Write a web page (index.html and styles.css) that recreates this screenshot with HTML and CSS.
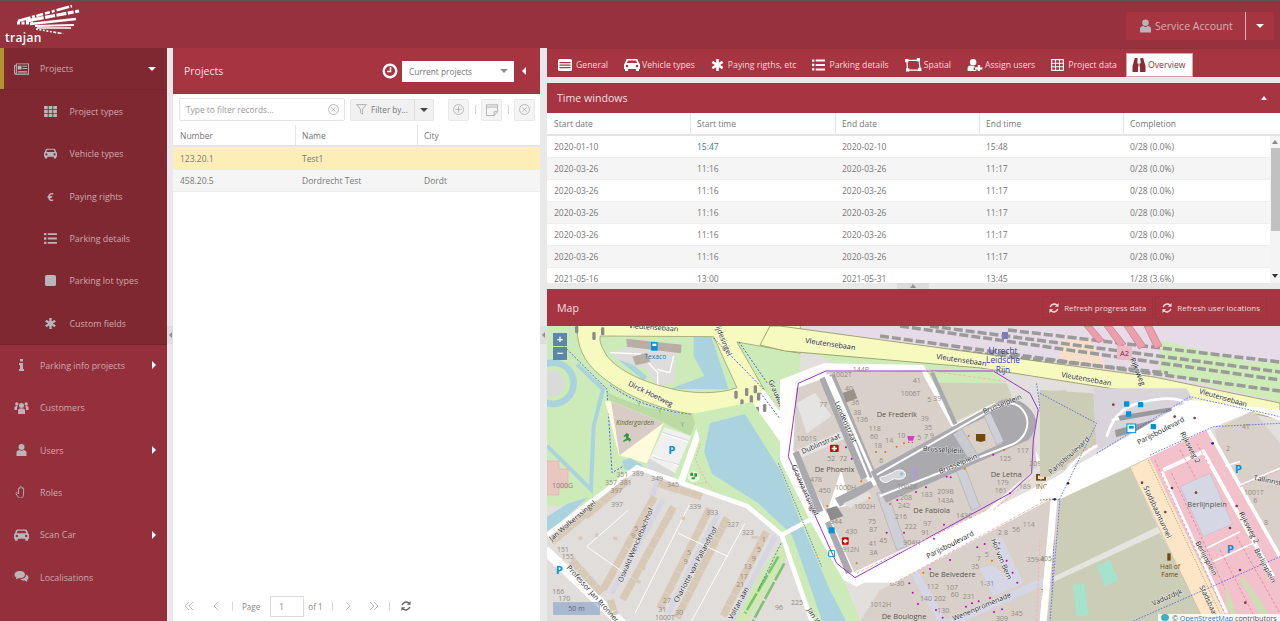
FILE: index.html
```html
<!DOCTYPE html>
<html lang="en">
<head>
<meta charset="utf-8">
<title>Trajan</title>
<link rel="stylesheet" href="styles.css">
</head>
<body>
<svg class="sprite" width="0" height="0">
  <defs>
    <symbol id="i-news" viewBox="0 0 16 12"><path fill="currentColor" fill-rule="evenodd" d="M0 2h2V0h14v12H1.500A1.500 1.500 0 0 1 0 10.500zM3 1v10h12V1zM1 3v7.500h1V3zM4 2.500h4v4H4zM9 2.500h5v1H9zM9 5h5v1H9zM4 8h10v1H4zM4 9.700h10v.8H4z"/></symbol>
    <symbol id="i-grid" viewBox="0 0 14 12"><path fill="currentColor" d="M0 0h4v3.500H0zM5 0h4v3.500H5zM10 0h4v3.500h-4zM0 4.250h4v3.500H0zM5 4.250h4v3.500H5zM10 4.250h4v3.500h-4zM0 8.500h4V12H0zM5 8.500h4V12H5zM10 8.500h4V12h-4z"/></symbol>
    <symbol id="i-car" viewBox="0 0 16 12"><path fill="currentColor" fill-rule="evenodd" d="M3.500 0h9c.7 0 1.200.4 1.400 1l1 3c.7.4 1.100 1 1.100 1.800V10h-1v1.500a.5.500 0 0 1-.5.500h-2a.5.500 0 0 1-.5-.5V10H4v1.500a.5.500 0 0 1-.5.500h-2a.5.500 0 0 1-.5-.5V10H0V5.800C0 5 .4 4.400 1.100 4l1-3c.2-.6.700-1 1.400-1zM3.800 1.500 3 4h10l-.8-2.500zM3 5.800a1.300 1.300 0 1 0 0 2.600 1.300 1.300 0 0 0 0-2.600zm10 0a1.300 1.300 0 1 0 0 2.600 1.300 1.300 0 0 0 0-2.600z"/></symbol>
    <symbol id="i-list" viewBox="0 0 14 12"><path fill="currentColor" d="M0 0h2.500v2.500H0zM4 .2h10v2.100H4zM0 4.750h2.500v2.500H0zM4 4.950h10v2.100H4zM0 9.500h2.500V12H0zM4 9.700h10v2.100H4z"/></symbol>
    <symbol id="i-square" viewBox="0 0 12 12"><rect width="12" height="12" rx="2" fill="currentColor"/></symbol>
    <symbol id="i-star" viewBox="0 0 12 12"><path fill="currentColor" d="M4.700 0h2.600v3.700l3.200-1.850 1.300 2.250L8.600 6l3.200 1.900-1.300 2.250L7.300 8.300V12H4.700V8.300l-3.200 1.850L.2 7.900 3.400 6 .2 4.100l1.300-2.250L4.700 3.700z"/></symbol>
    <symbol id="i-info" viewBox="0 0 6 12"><path fill="currentColor" d="M1.500 0h3v2.500h-3zM.5 4h4v6h1v2H.5v-2h1V6h-1z"/></symbol>
    <symbol id="i-users" viewBox="0 0 14 12"><g fill="currentColor"><circle cx="7" cy="3.500" r="2.500"/><circle cx="2.300" cy="2" r="1.700"/><circle cx="11.700" cy="2" r="1.700"/><path d="M3.500 12V8.500C3.500 7 5 6.200 7 6.200s3.500.8 3.500 2.300V12zM0 8V5.500C0 4.600 1 4 2.300 4c.5 0 .8.300 1 .8C2.500 5.500 2.400 7 2.500 8zM14 8V5.500C14 4.600 13 4 11.700 4c-.5 0-.8.300-1 .8.800.7.900 2.200.8 3.200z"/></g></symbol>
    <symbol id="i-user" viewBox="0 0 10 12"><g fill="currentColor"><circle cx="5" cy="3" r="3"/><path d="M0 12V8.500C0 7 1.500 6 3 6c.6.500 1.200.8 2 .8S6.400 6.500 7 6c1.500 0 3 1 3 2.500V12z"/></g></symbol>
    <symbol id="i-hand" viewBox="0 0 12 12"><path fill="none" stroke="currentColor" stroke-width=".9" d="M4 12c-1 0-1.500-1-2-2L.5 7.500c-.4-.8.600-1.500 1.200-.8L3 8V2.500c0-.8 1.200-.8 1.200 0V1.200c0-.8 1.300-.8 1.300 0v.3c0-.8 1.300-.8 1.300 0v1c0-.8 1.300-.8 1.300 0V8c0 2-.8 4-2.500 4z"/></symbol>
    <symbol id="i-chat" viewBox="0 0 14 12"><g fill="currentColor"><path d="M5.500 0C2.500 0 0 1.500 0 3.700c0 1.200.8 2.200 2 2.900L1.300 8.500 4 7.200c2.800.3 6.500-.8 6.500-3.500C10.500 1.500 8.500 0 5.500 0z"/><path d="M11.500 3.500c.3 3-2.500 4.500-5.500 4.700.8 1 2.500 1.500 4.200 1.300L13 11l-.6-2C13.500 8.400 14 7.500 14 6.500c0-1.200-1-2.400-2.500-3z"/></g></symbol>
    <symbol id="i-form" viewBox="0 0 14 12"><path fill="currentColor" fill-rule="evenodd" d="M1.500 0h11A1.500 1.500 0 0 1 14 1.500v9a1.500 1.500 0 0 1-1.500 1.500h-11A1.500 1.500 0 0 1 0 10.500v-9A1.500 1.500 0 0 1 1.500 0zM1.500 3v1.300h11V3zm0 2.500v1.300h11V5.500zm0 2.500v1.300h11V8z"/></symbol>
    <symbol id="i-spatial" viewBox="0 0 18 15"><g fill="none" stroke="currentColor" stroke-width="1.300"><path d="M3 2.500h11M2 3l.5 10M15 3l1 9M3 13h12"/></g><g fill="currentColor"><rect x="0" y="1" width="3.500" height="3.500"/><rect x="12.500" y="0" width="3.500" height="3.500"/><rect x="1" y="11" width="3.500" height="3.500"/><rect x="14" y="10.500" width="3.500" height="3.500"/></g></symbol>
    <symbol id="i-assign" viewBox="0 0 16 13"><g fill="currentColor"><circle cx="6" cy="3.500" r="3.500"/><path d="M0 13V9.800C0 8.200 1.500 7 3.500 7c.7.500 1.600.8 2.500.8.500 0 1-.1 1.500-.3v2H6.500V12h3v1z"/><path d="M11 6.500h2.500V9H16v2.300h-2.500V13H11v-1.700H8V9h3z"/></g></symbol>
    <symbol id="i-table" viewBox="0 0 13 12"><path fill="currentColor" fill-rule="evenodd" d="M1 0h11a1 1 0 0 1 1 1v10a1 1 0 0 1-1 1H1a1 1 0 0 1-1-1V1a1 1 0 0 1 1-1zm.2 1.300v2.500H4V1.300zm3.800 0v2.500h3V1.300zm4 0v2.500h2.800V1.300zM1.200 4.800v2.500H4V4.800zm3.800 0v2.500h3V4.800zm4 0v2.500h2.800V4.800zM1.200 8.300v2.500H4V8.300zm3.800 0v2.500h3V8.300zm4 0v2.500h2.800V8.300z"/></symbol>
    <symbol id="i-binoc" viewBox="0 0 14 15"><path fill="currentColor" d="M2.500 0h3v3h-.2v3H6v8.500a.5.500 0 0 1-.5.500H.5a.5.500 0 0 1-.5-.5V9zM8.500 0h3v0L14 9v5.500a.5.500 0 0 1-.5.500h-5a.5.500 0 0 1-.5-.5V6h.7V3h-.2zM6.500 6h1v3h-1z"/></symbol>
    <symbol id="i-refresh" viewBox="0 0 12 12"><g fill="none" stroke="currentColor" stroke-width="1.800"><path d="M1.500 5A4.700 4.700 0 0 1 9.500 2.800"/><path d="M10.500 7A4.700 4.700 0 0 1 2.500 9.200"/></g><path fill="currentColor" d="M11.500 0v4.500H7zM.5 12V7.500H5z"/></symbol>
    <symbol id="i-circle-plus" viewBox="0 0 14 14"><circle cx="7" cy="7" r="6.300" fill="none" stroke="currentColor"/><path stroke="currentColor" d="M7 3v8M3 7h8"/></symbol>
    <symbol id="i-circle-x" viewBox="0 0 14 14"><circle cx="7" cy="7" r="6.300" fill="none" stroke="currentColor"/><path stroke="currentColor" d="M4.300 4.300l5.400 5.400M9.700 4.300l-5.400 5.400"/></symbol>
    <symbol id="i-note" viewBox="0 0 14 14"><path fill="none" stroke="currentColor" d="M.5 1h13v8l-4 4.500H.5zM.5 3.500h13M9.500 13.500V9h4"/></symbol>
    <symbol id="i-funnel" viewBox="0 0 12 12"><path fill="none" stroke="currentColor" d="M.7.700h10.600L7.200 5.500V11L4.800 9.500v-4z"/></symbol>
    <symbol id="i-clock" viewBox="0 0 16 16"><circle cx="8" cy="8" r="6.300" fill="none" stroke="currentColor" stroke-width="2.400"/><path fill="none" stroke="currentColor" stroke-width="1.500" d="M8.500 4v4.500H5"/></symbol>
    <symbol id="i-dbl-l" viewBox="0 0 10 10"><path fill="none" stroke="currentColor" d="M5 1 1 5l4 4M9 1 5 5l4 4"/></symbol>
    <symbol id="i-sgl-l" viewBox="0 0 10 10"><path fill="none" stroke="currentColor" d="M7 1 3 5l4 4"/></symbol>
    <symbol id="i-sgl-r" viewBox="0 0 10 10"><path fill="none" stroke="currentColor" d="M3 1l4 4-4 4"/></symbol>
    <symbol id="i-dbl-r" viewBox="0 0 10 10"><path fill="none" stroke="currentColor" d="M1 1l4 4-4 4M5 1l4 4-4 4"/></symbol>
  </defs>
</svg>

<header class="topbar">
  <div class="logo">
    <svg class="logo-rays" viewBox="0 0 80 30">
      <g fill="none" stroke="#fff">
        <path stroke-width="2.600" stroke-dasharray="13 1.500 3 1.500 7 2 5 2 3 2" d="M18 17 72 2"/>
        <path stroke-width="3.200" stroke-dasharray="18 1.500 10 1.500 10 1.500 6 1.500" d="M26 17 79 7"/>
        <path stroke-width="2.600" d="M30 20 76 15"/>
        <path stroke-width="2" d="M35 22 74 21"/>
        <path stroke-width="1.500" d="M37 24 71 24"/>
        <path stroke-width="1.600" stroke-dasharray="2 1.500 2 1.500 2 1.500 2 1.500 2 1.500 3 1.500 4" d="M36 25 64 30"/>
        <path stroke-width="3" stroke-dasharray="3 1.500" d="M17 19 33 19"/>
      </g>
    </svg>
    <span class="logo-name">trajan</span>
  </div>
  <div class="account">
    <svg class="account-icon"><use href="#i-user"/></svg>
    <span class="account-name">Service Account</span>
    <span class="account-caret"><i class="tri-down tri-white"></i></span>
  </div>
</header>

<div class="layout">
  <nav class="sidebar">
    <div class="group-open">
      <a class="nav-item nav-current"><svg class="nav-icon"><use href="#i-news"/></svg><span>Projects</span><i class="tri-down tri-white nav-arrow"></i></a>
      <a class="nav-sub"><svg class="nav-icon"><use href="#i-grid"/></svg><span>Project types</span></a>
      <a class="nav-sub"><svg class="nav-icon"><use href="#i-car"/></svg><span>Vehicle types</span></a>
      <a class="nav-sub"><b class="nav-euro">€</b><span>Paying rights</span></a>
      <a class="nav-sub"><svg class="nav-icon"><use href="#i-list"/></svg><span>Parking details</span></a>
      <a class="nav-sub"><svg class="nav-icon"><use href="#i-square"/></svg><span>Parking lot types</span></a>
      <a class="nav-sub"><svg class="nav-icon"><use href="#i-star"/></svg><span>Custom fields</span></a>
    </div>
    <a class="nav-item"><svg class="nav-icon"><use href="#i-info"/></svg><span>Parking info projects</span><i class="tri-right nav-arrow"></i></a>
    <a class="nav-item"><svg class="nav-icon"><use href="#i-users"/></svg><span>Customers</span></a>
    <a class="nav-item"><svg class="nav-icon"><use href="#i-user"/></svg><span>Users</span><i class="tri-right nav-arrow"></i></a>
    <a class="nav-item"><svg class="nav-icon"><use href="#i-hand"/></svg><span>Roles</span></a>
    <a class="nav-item"><svg class="nav-icon"><use href="#i-car"/></svg><span>Scan Car</span><i class="tri-right nav-arrow"></i></a>
    <a class="nav-item"><svg class="nav-icon"><use href="#i-chat"/></svg><span>Localisations</span></a>
  </nav>

  <div class="split"><i class="split-tab"><i class="tri-left tri-grey"></i></i></div>

  <section class="projects">
    <div class="projects-head">
      <h2 class="projects-title">Projects</h2>
      <svg class="clock"><use href="#i-clock"/></svg>
      <div class="select"><span>Current projects</span><i class="tri-down tri-grey"></i></div>
      <i class="tri-left tri-white collapse"></i>
    </div>
    <div class="toolbar">
      <div class="filter-box"><span>Type to filter records...</span><svg class="ico-11"><use href="#i-circle-x"/></svg></div>
      <div class="filter-by">
        <span class="filter-main"><svg class="ico-11"><use href="#i-funnel"/></svg><span>Filter by...</span></span>
        <span class="filter-caret"><i class="tri-down tri-dark"></i></span>
      </div>
      <span class="tool-btn tool-first"><svg class="ico-11"><use href="#i-circle-plus"/></svg></span>
      <i class="tool-sep"></i>
      <span class="tool-btn"><svg class="ico-12"><use href="#i-note"/></svg></span>
      <i class="tool-sep"></i>
      <span class="tool-btn"><svg class="ico-11"><use href="#i-circle-x"/></svg></span>
    </div>
    <div class="grid-head list-cols">
      <span>Number</span><span>Name</span><span>City</span>
    </div>
    <div class="list-row list-cols row-selected"><span>123.20.1</span><span>Test1</span><span></span></div>
    <div class="list-row list-cols row-alt"><span>458.20.5</span><span>Dordrecht Test</span><span>Dordt</span></div>
    <div class="pager">
      <svg class="pg-ico pg-a"><use href="#i-dbl-l"/></svg>
      <svg class="pg-ico pg-b"><use href="#i-sgl-l"/></svg>
      <i class="pg-sep"></i>
      <span class="pg-text pg-page">Page</span>
      <span class="pg-input">1</span>
      <span class="pg-text pg-of">of 1</span>
      <i class="pg-sep pg-sep2"></i>
      <svg class="pg-ico pg-c"><use href="#i-sgl-r"/></svg>
      <svg class="pg-ico pg-d"><use href="#i-dbl-r"/></svg>
      <i class="pg-sep pg-sep3"></i>
      <svg class="pg-refresh"><use href="#i-refresh"/></svg>
    </div>
  </section>

  <div class="split split-right"><i class="split-tab"><i class="tri-left tri-grey"></i></i></div>

  <section class="detail">
    <div class="tabs">
      <a class="tab"><svg class="tab-ico w14"><use href="#i-form"/></svg><span>General</span></a>
      <a class="tab"><svg class="tab-ico w16"><use href="#i-car"/></svg><span class="tight">Vehicle types</span></a>
      <a class="tab"><svg class="tab-ico w13"><use href="#i-star"/></svg><span>Paying rigths, etc</span></a>
      <a class="tab"><svg class="tab-ico w13"><use href="#i-list"/></svg><span>Parking details</span></a>
      <a class="tab"><svg class="tab-ico w17"><use href="#i-spatial"/></svg><span class="tight">Spatial</span></a>
      <a class="tab"><svg class="tab-ico w16"><use href="#i-assign"/></svg><span class="tight">Assign users</span></a>
      <a class="tab"><svg class="tab-ico w13"><use href="#i-table"/></svg><span>Project data</span></a>
      <a class="tab tab-active"><svg class="tab-ico w14"><use href="#i-binoc"/></svg><span class="tight">Overview</span></a>
    </div>

    <div class="panel-head tw-head"><h3>Time windows</h3><i class="tri-up tri-white"></i></div>
    <div class="tw">
      <div class="grid-head tw-head-row tw-cols"><span>Start date</span><span>Start time</span><span>End date</span><span>End time</span><span>Completion</span></div>
      <div class="tw-body">
        <div class="tw-rows">
          <div class="tw-row tw-cols"><span>2020-01-10</span><span class="time-blue">15:47</span><span>2020-02-10</span><span>15:48</span><span>0/28 (0.0%)</span></div>
          <div class="tw-row tw-cols row-alt"><span>2020-03-26</span><span>11:16</span><span>2020-03-26</span><span>11:17</span><span>0/28 (0.0%)</span></div>
          <div class="tw-row tw-cols"><span>2020-03-26</span><span>11:16</span><span>2020-03-26</span><span>11:17</span><span>0/28 (0.0%)</span></div>
          <div class="tw-row tw-cols row-alt"><span>2020-03-26</span><span>11:16</span><span>2020-03-26</span><span>11:17</span><span>0/28 (0.0%)</span></div>
          <div class="tw-row tw-cols"><span>2020-03-26</span><span>11:16</span><span>2020-03-26</span><span>11:17</span><span>0/28 (0.0%)</span></div>
          <div class="tw-row tw-cols row-alt"><span>2020-03-26</span><span>11:16</span><span>2020-03-26</span><span>11:17</span><span>0/28 (0.0%)</span></div>
          <div class="tw-row tw-cols"><span>2021-05-16</span><span>13:00</span><span>2021-05-31</span><span>13:45</span><span>1/28 (3.6%)</span></div>
        </div>
        <div class="scrollbar"><i class="sb-up"></i><i class="sb-thumb"></i><i class="sb-down"></i></div>
      </div>
    </div>
    <div class="hsplit"><i class="hsplit-tab"><i class="tri-up tri-grey"></i></i></div>

    <div class="panel-head map-head">
      <h3>Map</h3>
      <a class="map-btn"><svg class="ico-10"><use href="#i-refresh"/></svg><span>Refresh progress data</span></a>
      <a class="map-btn"><svg class="ico-10"><use href="#i-refresh"/></svg><span>Refresh user locations</span></a>
    </div>

    <div class="map">
      <svg class="map-svg" viewBox="547 326 733 295" preserveAspectRatio="none">
        <rect x="547" y="326" width="733" height="295" fill="#e2dfdc"/>

        <!-- railway land -->
        <path fill="#e8dbe8" d="M770 326H1280V404L1154 376 1014 357 770 326z"/>
        <path fill="#cfecb8" d="M1160 340l90 22 30 0v40l-120-28z"/>
        <path fill="#cfecb8" d="M787 340 960 350 1010 390 870 380z"/>
        <path fill="#f5dfc9" d="M1060 340l30 0 20 30-50-8z"/>
        <g fill="none" stroke="#9a9a9a" stroke-width="3.500" stroke-dasharray="9 3">
          <path d="M900 326 1280 380"/><path d="M930 326 1280 372"/><path d="M1008 330 1280 362"/><path d="M830 338 1168 373"/><path d="M880 336 1280 391"/>
        </g>
        <path fill="#eb9eac" stroke="#c86070" stroke-width=".5" d="M1084 326h8l12 14-6 3zM1104 326h8l14 18-7 3zM1124 326h8l14 20-7 3zM1144 326h8l10 20-7 3z"/>
        <rect x="1117" y="346" width="15" height="14" rx="2" fill="#ecbac4"/>
        <text class="t-shield" x="1124.500" y="356">A2</text>
        <rect x="1002" y="332" width="6" height="7" fill="#7c7cb8"/>

        <!-- north-west quarter, drawn in zoomed coordinates -->
        <g transform="translate(547 326) scale(.3333)">
          <rect x="0" y="0" width="760" height="540" fill="#cdebb8"/>
          <circle cx="18" cy="172" r="72" fill="#aad3df"/>
          <circle cx="18" cy="172" r="52" fill="#cdebb8"/>
          <circle cx="12" cy="172" r="40" fill="#dadada"/>
          <path fill="none" stroke="#aad3df" stroke-width="12" d="M90 115 168 190 140 300 132 490 0 360"/>
          <path fill="none" stroke="#3344ee" stroke-width="2.500" stroke-dasharray="6 5" d="M20 30 180 190 195 440 230 420"/>
          <!-- ring of the yellow road -->
          <path fill="#aad3df" d="M440 28H492L545 190 370 188 472 150 440 90z"/>
          <path fill="#aad3df" d="M210 98 232 96 300 150 292 164z"/>
          <path fill="#dedddb" d="M190 80 255 60 390 76 380 170 332 182 300 130 210 100z"/>
          <path fill="none" stroke="#fff" stroke-width="4" d="M190 80 280 84 332 140 332 182M380 90 368 140 330 130"/>
          <path fill="#b9aea6" d="M238 38 404 56 402 82 240 62z"/>
          <path fill="#b9aea6" d="M256 92 300 80 310 108 266 118z"/>
          <path fill="#0092da" d="M312 48h20v26h-20z"/><path fill="#fff" d="M316 53h12v7h-12z"/>
          <text class="t-texaco3" x="325" y="98">Texaco</text>
          <path fill="#f7fabf" stroke="#8f9160" stroke-width="2" fill-rule="evenodd" d="M90 -10H760V82L570 48 652 192 640 240 600 252C540 268 460 272 400 258 300 238 200 190 140 130 100 90 88 40 90 -10zM160 30 500 32 570 185C520 205 430 205 360 185 280 165 210 130 180 90 165 65 155 45 160 30z"/>
          <path fill="none" stroke="#3344ee" stroke-width="2.500" stroke-dasharray="6 5" d="M500 36 650 190M190 178C260 230 360 262 460 268 530 270 590 260 620 246M576 48 660 170"/>
          <!-- kindergarten -->
          <path fill="#bcdba4" d="M178 198C260 240 360 262 454 268L430 330 350 290 190 226z"/>
          <path fill="#fdfbdc" d="M174 226 192 226 350 290 300 412 216 388z"/>
          <path fill="#d7cdc6" d="M192 226 350 290 218 388z"/>
          <path fill="#f0f0f0" d="M352 304 432 330 384 442 308 398z"/>
          <path fill="#d9d9d9" d="M308 398 384 442 372 470 296 430z"/>
          <path fill="none" stroke="#fff" stroke-width="3" d="M344 322 424 348M318 388 396 420"/>
          <path fill="none" stroke="#a0a0a0" stroke-width="1" d="M344 318 424 344M318 394 396 416"/>
          <path fill="#aad3df" d="M226 404 250 396 296 424 270 436 232 430z"/>
          <path fill="#2a9a3a" d="M238 322l8 2-2 10 8 6-3 8-6-6-6 2-7 4-2-3 10-8-2-6-5 2-1-3z"/>
          <text class="t-kinder3" x="207" y="296">Kindergarden</text>
          <text class="t-p" x="364" y="384">P</text>
          <g class="t-tree"><text x="270" y="240">Y</text><text x="332" y="262">Y</text><text x="400" y="304">Y</text></g>
          <!-- lanes east of the singel -->
          <path fill="none" stroke="#fff" stroke-width="20" d="M474 264 398 480"/>
          <path fill="#e0e0e8" stroke="#a6a6a6" d="M575 268 600 262 704 430 680 448z"/>
          <path fill="#fff" d="M620 250 650 190 760 340V480L700 420z"/>
          <path fill="none" stroke="#3344ee" stroke-width="2.500" stroke-dasharray="6 5" d="M592 256 720 440M640 200 760 360"/>
          <path fill="none" stroke="#f4a6a6" stroke-width="2.500" stroke-dasharray="6 5" d="M484 280 445 400 480 470 540 530M480 470 400 480M672 210 760 330"/>
          <ellipse cx="440" cy="452" rx="18" ry="16" fill="#e8f8d8"/>
          <path fill="#2a9a4a" d="M430 440h8v10h-8zM442 442h8v10h-8zM434 454h10v6h-10z"/>
          <!-- parked vehicles -->
          <g fill="#8a8a8a"><rect x="84" y="0" width="10" height="22" rx="4"/><rect x="136" y="18" width="10" height="24" rx="4"/><rect x="162" y="4" width="10" height="24" rx="4"/><rect x="562" y="194" width="10" height="24" rx="4"/><rect x="580" y="220" width="10" height="24" rx="4"/><rect x="594" y="186" width="10" height="24" rx="4"/><rect x="608" y="208" width="10" height="24" rx="4"/><rect x="620" y="178" width="10" height="24" rx="4"/><rect x="630" y="200" width="10" height="24" rx="4"/><rect x="626" y="242" width="10" height="24" rx="4"/><rect x="648" y="234" width="10" height="24" rx="4"/></g>
          <g class="t-road">
            <text transform="translate(242 178) rotate(26)">Dirck Hoetweg</text>
            <text transform="translate(290 452) rotate(19)">Jan Wolkerssingel</text>
            <text transform="translate(506 4) rotate(68)">ijdesingel</text>
            <text transform="translate(664 166) rotate(66)">Grauwaartsingel</text>
            <text transform="translate(245 6) rotate(4)">Vleutensebaan</text>
          </g>
        </g>

        <!-- Vleutensebaan -->
        <path fill="#f7fabf" stroke="#8f9160" stroke-width=".8" d="M780 326 1014 358 1154 377 1280 403V419L1197 402 981 368 785 351 760 345 770 326z"/>

        <!-- main canal -->
        <path fill="#cdebb8" d="M692 414 752 402 800 470 860 621H790L785 535 718 500z"/>
        <path fill="#aad3df" d="M710 423 745 414 780 470 800 520 830 590 846 621H822L808 580 792 535 758 503 712 474 704 452z"/>

        <!-- residential south-west, drawn in zoomed coordinates -->
        <g transform="translate(545 500) scale(.3333)">
          <path fill="#aad3df" d="M6 50 70 10 130 -8 20 90 6 100z"/>
          <path fill="#e0dddb" d="M6 130 276 -93 606 18 710 105 800 363H6z"/>
          <path fill="none" stroke="#fff" stroke-width="14" d="M6 105 276 -98 606 18 710 105 800 363"/>
          <path fill="none" stroke="#fff" stroke-width="14" d="M710 105 850 30"/>
          <path fill="none" stroke="#fff" stroke-width="30" d="M0 150 240 380"/>
          <path fill="none" stroke="#d5d6e2" stroke-width="16" d="M354 0 200 280M520 40 370 340M690 110 560 363M345 -70 320 -10"/>
          <path fill="#cfe8b4" d="M650 210 712 125 725 170 610 363H570z"/>
          <path fill="none" stroke="#5bbb4a" stroke-width="8" stroke-dasharray="58 6" opacity=".75" d="M700 170 600 340M718 190 624 363"/>
          <path fill="none" stroke="#3344ee" stroke-width="2" stroke-dasharray="6 5" d="M708 130 640 270"/>
          <g fill="none" stroke="#d8c8b6" stroke-width="22" stroke-dasharray="34 1.500">
            <path d="M386 20 232 300"/><path d="M328 -10 174 270"/><path d="M546 54 396 354"/><path d="M494 26 344 326"/><path d="M664 96 534 349"/><path d="M160 10 20 125"/><path d="M80 180 170 280"/><path d="M250 -60 120 50"/><path d="M470 -10 340 -50"/><path d="M196 300 210 345"/>
          </g>
          <g fill="none" stroke="#fff" stroke-width="3">
            <path d="M435 10 270 340M600 70 440 363M250 30 125 140 240 220M400 100 550 170"/>
          </g>
          <g fill="#d8c8b6">
            <rect x="205" y="110" width="12" height="10"/><rect x="150" y="100" width="10" height="10"/><rect x="290" y="200" width="12" height="10"/><rect x="275" y="240" width="12" height="10"/><rect x="450" y="210" width="12" height="10"/><rect x="470" y="170" width="12" height="10"/><rect x="370" y="50" width="12" height="8"/><rect x="410" y="50" width="10" height="10"/><rect x="100" y="110" width="12" height="10"/><rect x="620" y="108" width="20" height="8"/>
          </g>
          <g class="t-num"><text x="198" y="20">397</text><text x="432" y="26">339</text><text x="484" y="46">333</text><text x="546" y="80">327</text><text x="590" y="106">323</text><text x="36" y="156">151</text><text x="50" y="178">155</text><text x="268" y="92">5</text><text x="258" y="114">9</text><text x="426" y="166">5</text><text x="416" y="192">9</text><text x="650" y="126">1</text><text x="636" y="156">5</text><text x="620" y="182">9</text><text x="596" y="208">13</text><text x="584" y="236">17</text><text x="574" y="262">21</text><text x="354" y="310">27</text><text x="340" y="336">31</text><text x="390" y="344">30</text><text x="330" y="360">1000T</text><text x="22" y="282">166</text><text x="40" y="304">170</text><text x="690" y="330">96</text><text x="738" y="316">225</text>
            <text x="214" y="-70">351</text><text x="260" y="-72">389</text><text x="180" y="-44">357</text><text x="224" y="-46">381</text><text x="196" y="-22">397</text><text x="318" y="-58">349</text><text x="366" y="-38">345</text></g>
          <text class="t-p" x="32" y="222">P</text>
          <g class="t-road">
            <text transform="translate(20 124) rotate(-40)">Jan Wolkerssingel</text>
            <text transform="translate(232 248) rotate(-67)">Oswald Wenckebachhof</text>
            <text transform="translate(398 310) rotate(-62)">Charlotte van Pallandthof</text>
            <text transform="translate(64 204) rotate(48)">Professor Jan Bronner</text>
            <text transform="translate(562 360) rotate(-62)">Voltan aan</text>
            <text transform="translate(786 330) rotate(58)">Jan Wol</text>
          </g>
        </g>
        <path fill="#e9c7c0" stroke="#d9aaa0" stroke-width=".5" d="M547 461h12v8h9v19h-9v7h-12z"/>
        <text class="t-num-s" x="552" y="488">1000G</text>

        <!-- area south of Parijsboulevard -->
        <path fill="#d9d0ca" d="M880 590 1060 493V621H860z"/>
        <g transform="translate(860 540) scale(.3333)">
          <path fill="none" stroke="#d5d6e6" stroke-width="24" d="M165 100 250 250"/>
          <path fill="none" stroke="#d5d6e6" stroke-width="24" d="M270 250 565 118"/>
          <path fill="#d5d6e6" d="M400 0 425 -10 490 130 400 170 360 85 398 76 440 110z"/>
          <path fill="none" stroke="#fff" stroke-width="12" d="M568 0 545 243"/>
          <path fill="none" stroke="#3344ee" stroke-width="2" stroke-dasharray="5 4" d="M582 0 572 243"/>
          <path fill="none" stroke="#f5b4b4" stroke-width="3" stroke-dasharray="8 5" d="M540 0 530 243"/>
          <g fill="#c000c0"><circle cx="98" cy="15" r="3"/><circle cx="270" cy="60" r="3"/><circle cx="210" cy="87" r="3"/><circle cx="148" cy="130" r="3"/><circle cx="158" cy="158" r="3"/><circle cx="174" cy="192" r="3"/><circle cx="228" cy="210" r="3"/><circle cx="248" cy="233" r="3"/><circle cx="318" cy="200" r="3"/><circle cx="336" cy="190" r="3"/><circle cx="356" cy="184" r="3"/><circle cx="390" cy="174" r="3"/><circle cx="402" cy="216" r="3"/><circle cx="426" cy="208" r="3"/><circle cx="440" cy="62" r="3"/><circle cx="458" cy="98" r="3"/><circle cx="472" cy="128" r="3"/><circle cx="352" cy="22" r="3"/><circle cx="374" cy="12" r="3"/></g>
          <g fill="#e67300"><circle cx="190" cy="98" r="3"/><circle cx="396" cy="62" r="3"/><circle cx="418" cy="10" r="3"/></g>
          <g class="t-num"><text x="90" y="138">6-30</text><text x="200" y="148">112</text><text x="258" y="150">107</text><text x="272" y="172">60</text><text x="308" y="178">231</text><text x="180" y="182">140</text><text x="222" y="182">202</text><text x="232" y="220">130</text><text x="30" y="200">1012H</text><text x="360" y="138">1-31</text><text x="452" y="228">345</text><text x="408" y="242">309</text></g>
          <text class="t-name" x="65" y="236">De Boulogne</text>
          <g class="t-road"><text transform="translate(282 243) rotate(-23)">Wenenpromenade</text><text transform="translate(558 235) rotate(-90)">oulevard</text></g>
        </g>

        <!-- central block, drawn in zoomed coordinates -->
        <g transform="translate(780 360) scale(.3333)">
          <path fill="#cdebb8" d="M430 12 640 30 676 72 500 78 470 50z"/>
          <path fill="#fff" d="M0 60 130 10 430 15 530 190 640 130 700 120 780 300 640 450 230 680 190 660 100 500 0 300z"/>
          <path fill="#fff" d="M230 640 640 445 860 335V392L345 668H230z"/>
          <path fill="#cdebb8" d="M440 16 640 30 676 72 500 78 470 50z"/>
          <path fill="#d0d0bc" d="M476 68 680 70 700 122 640 130 524 185z"/>
          <path fill="#d0d0bc" d="M775 95 860 90V330L800 330z"/>
          <path fill="#d9d0ca" d="M140 36 425 32 518 200 545 210 760 170 770 320 620 450 222 636 140 450 210 436 120 70z"/>
          <path fill="#d9d0ca" d="M48 85 118 60 220 220 140 460 40 270z"/>
          <path fill="#e6e4e3" d="M50 130 105 98 155 168 80 220z"/>
          <path fill="#e6e4e5" d="M50 270 190 212 205 232 62 294z"/>
          <path fill="#fff" d="M120 44 150 42 292 372 272 385z"/>
          <path fill="#a9a9ae" d="M118 58 134 50 262 350 244 360z"/>
          <path fill="#a9a9ae" d="M148 46 164 42 290 345 270 355z"/>
          <path fill="none" stroke="#fff" stroke-width="9" d="M150 50 286 360"/>
          <rect x="192" y="92" width="36" height="30" fill="#9a9288" transform="rotate(-20 210 107)"/>
          <path fill="#cfcfd8" stroke="#8c8c92" d="M290 400 320 390 380 560 350 570z"/>
          <path fill="none" stroke="#fff" stroke-width="14" d="M435 40 520 195"/>
          <path fill="#a9a9ae" d="M450 40 462 36 532 190 520 195z"/>
          <path fill="#cfcfd8" stroke="#8c8c92" d="M520 310 545 295 600 440 575 452z"/>
          <!-- square with horseshoe -->
          <path fill="#a9a9ae" d="M272 335 670 118A86 90 0 0 1 768 180 88 88 0 0 1 745 240L318 428z"/>
          <path fill="#a9a9ae" d="M640 155C680 130 730 150 738 190 742 222 720 236 700 246L670 252z"/>
          <path fill="none" stroke="#fff" stroke-width="6" d="M300 408 700 252C745 230 752 182 730 152 712 126 680 124 650 140L290 345"/>
          <path fill="#d9d0ca" d="M530 212 620 170 666 250 572 292z"/>
          <path fill="#c9c9d0" stroke="#8c8c92" d="M518 222 546 208 600 296 572 308z"/>
          <path fill="#cfcfd8" stroke="#8c8c92" d="M612 168 632 158 672 244 650 254z"/>
          <path fill="#a9a9ae" d="M165 415 272 362 282 380 180 440z"/>
          <path fill="#8d8d8d" d="M138 448 170 438 190 468 152 482z"/>
          <path fill="#e3e1df" d="M190 430 266 395 276 412 210 444z"/>
          <path fill="#a9a9ae" d="M38 280 56 272 130 452 110 460z"/>
          <path fill="#a9a9ae" d="M135 490 150 482 218 636 198 642z"/>
          <path fill="#d7d7db" stroke="#fff" stroke-width="3" d="M304 350c14 0 18-8 34-12 14-12 34-10 38 2 4 12-10 22-32 16-12 2-22 16-34 10-10-2-14-14-6-16z"/>
          <circle cx="365" cy="342" r="5" fill="#8fc4e8"/>
          <!-- purple boundary -->
          <path fill="none" stroke="#9933cc" stroke-width="3" d="M138 33H640L750 100 775 150 760 240 755 340 690 400 225 653 170 610 25 290 55 70z"/>
          <path fill="none" stroke="#f5b4b4" stroke-width="3" stroke-dasharray="10 5" d="M430 30 680 65M640 450 800 320M230 640 620 450M345 668 840 398"/>
          <path fill="none" stroke="#3344ee" stroke-width="2" stroke-dasharray="5 4" d="M-5 310 125 620M770 70 800 300"/>
          <g fill="#c000c0"><circle cx="198" cy="262" r="3"/><circle cx="215" cy="296" r="3"/><circle cx="438" cy="382" r="3"/><circle cx="408" cy="396" r="3"/><circle cx="352" cy="420" r="3"/><circle cx="320" cy="518" r="3"/><circle cx="372" cy="518" r="3"/><circle cx="492" cy="494" r="3"/><circle cx="512" cy="352" r="3"/><circle cx="500" cy="350" r="3"/><circle cx="640" cy="284" r="3"/><circle cx="690" cy="400" r="3"/><circle cx="462" cy="536" r="3"/></g>
          <g fill="#e67300"><circle cx="288" cy="276" r="3"/><circle cx="316" cy="276" r="3"/><circle cx="350" cy="260" r="3"/><circle cx="372" cy="250" r="3"/><circle cx="566" cy="228" r="3"/><circle cx="244" cy="364" r="3"/><circle cx="268" cy="414" r="3"/><circle cx="330" cy="432" r="3"/><circle cx="142" cy="438" r="3"/><circle cx="230" cy="610" r="3"/><circle cx="554" cy="326" r="3"/><circle cx="672" cy="270" r="3"/></g>
          <rect x="150" y="254" width="26" height="22" rx="3" fill="#d40000"/><path fill="#fff" d="M160 258h6v5h5v5h-5v5h-6v-5h-5v-5h5z"/>
          <rect x="186" y="532" width="20" height="22" rx="3" fill="#d40000"/><path fill="#fff" d="M193 537h6v4h4v5h-4v4h-6v-4h-4v-5h4z"/>
          <rect x="146" y="502" width="18" height="18" rx="2" fill="#0092da"/>
          <rect x="146" y="572" width="18" height="18" rx="2" fill="none" stroke="#0092da" stroke-width="3"/>
          <path fill="#d040c0" d="M382 228h22l-5 14h-14zM384 245h4v4h-4zM395 245h4v4h-4z"/>
          <path fill="#734a08" d="M588 222h28v20l-14 4-14-4z"/>
          <rect x="768" y="342" width="30" height="20" fill="#734a08"/><rect x="774" y="347" width="18" height="10" fill="#f0e4c8"/>
          <g class="t-num">
            <text x="218" y="36">144P</text><text x="156" y="50">1002T</text><text x="195" y="92">40</text><text x="214" y="134">36</text><text x="220" y="164">38</text><text x="228" y="186">136</text>
            <text x="398" y="70">41</text><text x="362" y="108">1006T</text><text x="442" y="126">5</text><text x="460" y="124">39</text><text x="422" y="182">39</text><text x="432" y="210">35</text><text x="412" y="240">5</text><text x="432" y="236">7</text><text x="450" y="234">9</text>
            <text x="118" y="140">77</text><text x="50" y="242">1001S</text><text x="266" y="214">118</text><text x="270" y="236">60</text><text x="282" y="264">18</text><text x="316" y="250">14</text><text x="352" y="234">10</text><text x="298" y="308">6</text>
            <text x="142" y="304">52</text><text x="178" y="304">72</text><text x="90" y="366">478</text><text x="116" y="398">450</text><text x="165" y="390">1000H</text><text x="222" y="446">1002H</text>
            <text x="352" y="386">1002K</text><text x="360" y="420">208</text><text x="422" y="412">183</text><text x="472" y="402">209B</text><text x="472" y="428">143A</text><text x="354" y="444">242</text><text x="345" y="476">216</text><text x="528" y="474">143C</text><text x="374" y="506">222</text><text x="430" y="498">97</text><text x="424" y="524">91</text>
            <text x="264" y="492">75</text><text x="268" y="516">87</text><text x="196" y="522">430</text><text x="266" y="558">41</text><text x="298" y="548">45</text><text x="268" y="586">3A</text><text x="186" y="576">912N</text><text x="150" y="492">944</text><text x="370" y="556">904H</text>
            <text x="710" y="278">117</text><text x="658" y="304">125</text><text x="748" y="318">209</text><text x="650" y="376">179</text><text x="644" y="398">161</text><text x="716" y="386">189</text>
            <text x="728" y="500">114</text><text x="696" y="516">56</text><text x="654" y="524">2</text><text x="672" y="524">8</text><text x="590" y="602">7</text><text x="614" y="592">5</text><text x="574" y="628">35</text><text x="740" y="606">359-405</text>
          </g>
          <g class="t-name">
            <text x="290" y="172">De Frederik</text><text x="104" y="336">De Phoenix</text><text x="400" y="458">De Fabiola</text><text x="632" y="352">De Letna</text><text x="448" y="650">De Belvedere</text>
          </g>
          <text class="t-ing" x="768" y="388">ING</text>
          <text class="t-big" x="388" y="360">1</text>
          <g class="t-road">
            <text x="428" y="272" transform="rotate(4 428 272)">Brusselplein</text>
            <text transform="translate(612 162) rotate(-22)">Brusselplein</text>
            <text transform="translate(480 342) rotate(-23)">Brusselplein</text>
            <text transform="translate(163 128) rotate(66)">Londenstraat</text>
            <text transform="translate(68 282) rotate(-23)">Dublinstraat</text>
            <text transform="translate(34 318) rotate(66)">Grauwaartsingel</text>
            <text transform="translate(444 596) rotate(-27)">Parijsboulevard</text>
            <text transform="translate(632 540) rotate(67)">Hof van Bern</text>
          </g>
        </g>

        <!-- east side, drawn in zoomed coordinates -->
        <g transform="translate(1040 380) scale(.3333)">
          <path fill="#cbcdb6" d="M0 30 160 40 170 190 30 290 0 290z"/>
          <path fill="#cbcdb6" d="M62 355 270 262 352 440 44 590z"/>
          <path fill="#cbcdb6" d="M40 600 358 455 500 723H20z"/>
          <path fill="#e6e4de" d="M40 590 355 440 362 458 40 606z"/>
          <path fill="none" stroke="#fff" stroke-width="20" d="M42 360 10 723"/>
          <path fill="#fde5c8" stroke="#a3a08c" d="M270 262 330 232 565 723H492z"/>
          <path fill="none" stroke="#a98b3c" stroke-dasharray="4 4" stroke-width="2" d="M325 240 540 700"/>
          <path fill="#a6e3cc" d="M170 558 210 540 235 600 195 618z"/>
          <path fill="#a6e3cc" d="M100 615 132 610 146 705 110 710z"/>
          <!-- bus station -->
          <path fill="#d9d4dc" d="M160 25H440L470 80 170 210z"/>
          <path fill="none" stroke="#fff" stroke-width="8" d="M200 170C220 100 260 70 340 60 400 50 440 60 450 80M215 120 420 80"/>
          <path fill="#999" d="M235 108 392 82 398 94 240 122z"/>
          <path fill="#999" d="M225 150 400 104 406 118 228 172z"/>
          <path fill="none" stroke="#fff" stroke-width="9" d="M70 285C110 235 140 210 172 196"/>
          <!-- pink square -->
          <path fill="#f2c1cc" d="M330 232 498 150 720 520V723H565z"/>
          <path fill="none" stroke="#fff" stroke-width="12" d="M370 270 490 215 700 590"/>
          <path fill="none" stroke="#fff" stroke-width="10" d="M365 275 560 700"/>
          <path fill="none" stroke="#fff" stroke-width="5" d="M500 505 600 455M518 545 640 490"/>
          <path fill="none" stroke="#e0708a" stroke-width="2" stroke-dasharray="8 6" d="M345 240 565 723M395 280 600 723M420 210 470 300M470 190 510 260M540 510 650 723M590 470 720 700"/>
          <path fill="#d5d7e5" stroke="#a9a9b5" d="M420 320 510 280 578 432 490 470z"/>
          <path fill="#ccdfb4" d="M555 610 590 700 605 723H585L560 680zM610 590 700 720H670L600 600z"/>
          <!-- east block and main roads -->
          <path fill="#d8d0c9" d="M525 150 640 92 720 190V520L545 240z"/>
          <path fill="none" stroke="#fff" stroke-width="11" d="M505 150 720 530"/>
          <path fill="none" stroke="#fff" stroke-width="5" d="M556 258 600 245M600 315 720 265"/>
          <path fill="#fff" d="M0 345 30 300 170 222 450 60 720 90V122L640 92 500 150 60 358z"/>
          <path fill="none" stroke="#3344ee" stroke-width="2" stroke-dasharray="5 4" d="M0 40 170 130 60 355 30 723M170 220 450 50 720 110M0 360 60 358M330 225 520 140 720 130M280 723 720 530"/>
          <path fill="none" stroke="#f5a8a8" stroke-width="3" stroke-dasharray="10 6" d="M170 190 0 300M600 320 720 270"/>
          <g fill="#0092da">
            <rect x="252" y="64" width="16" height="16" rx="2"/><rect x="294" y="66" width="16" height="16" rx="2"/><rect x="258" y="94" width="16" height="16" rx="2"/><rect x="332" y="132" width="16" height="16" rx="2"/>
          </g>
          <rect x="261" y="132" width="26" height="26" fill="#fff" stroke="#0092da" stroke-width="3"/><rect x="267" y="138" width="14" height="8" fill="#0092da"/>
          <g class="t-p"><text x="584" y="278">P</text><text x="560" y="518">P</text></g>
          <rect x="382" y="520" width="10" height="22" fill="#734a08"/>
          <g fill="#7a4040"><circle cx="404" cy="110" r="4"/><circle cx="464" cy="114" r="4"/><circle cx="396" cy="324" r="4"/><circle cx="468" cy="338" r="4"/><circle cx="590" cy="378" r="4"/><circle cx="570" cy="444" r="4"/><circle cx="376" cy="396" r="4"/><circle cx="306" cy="308" r="4"/><circle cx="220" cy="74" r="4"/><circle cx="600" cy="570" r="4"/><circle cx="616" cy="668" r="4"/></g>
          <g fill="#22229a"><circle cx="84" cy="310" r="4"/><circle cx="44" cy="358" r="4"/><circle cx="518" cy="190" r="4"/></g>
          <g class="t-num"><text x="606" y="148">4T</text><text x="558" y="214">2</text><text x="612" y="344">1001T</text><text x="640" y="370">6</text><text x="672" y="434">8</text><text x="0" y="544">405</text></g>
          <text class="t-name" x="442" y="382">Berlijnplein</text>
          <g class="t-poi"><text x="360" y="568">Hall of</text><text x="364" y="592">Fame</text></g>
          <g class="t-road">
            <text transform="translate(476 40) rotate(16)">Vleutensebaan</text>
            <text transform="translate(296 194) rotate(-27)">Parijsboulevard</text>
            <text transform="translate(34 284) rotate(-42)">Parijsboulevard</text>
            <text transform="translate(420 160) rotate(62)">Rijksweg 2</text>
            <text transform="translate(596 400) rotate(62)">Rijksweg 2</text>
            <text transform="translate(642 510) rotate(62)">Berlijnplein</text>
            <text transform="translate(466 488) rotate(62)">Berlijnplein</text>
            <text transform="translate(310 322) rotate(65)">Stadsbaantunnel</text>
            <text transform="translate(478 620) rotate(65)">Stadsbaan</text>
            <text transform="translate(340 678) rotate(-24)">Vaduzdijk</text>
            <text transform="translate(640 300) rotate(11)">Tallinnstraat</text>
          </g>
        </g>

        <g class="t-road-s">
          <text transform="translate(805 343) rotate(8)">Vleutensebaan</text>
          <text transform="translate(936 359) rotate(8)">Vleutensebaan</text>
          <text transform="translate(1061 377) rotate(10)">Vleutensebaan</text>
          <text transform="translate(1130 359) rotate(68)">Rijksweg</text>
        </g>
        <text class="t-station" x="1003" y="354">Utrecht</text>
        <text class="t-station" x="1003" y="363">Leidsche</text>
        <text class="t-station" x="1003" y="373">Rijn</text>
      </svg>

      <div class="zoom-ctl"><span class="zoom-btn">+</span><span class="zoom-btn">−</span></div>
      <div class="scale-bar">50 m</div>
      <div class="attribution"><i class="osm-dot"></i>© <span class="osm-link">OpenStreetMap</span> contributors</div>
    </div>
  </section>
</div>
</body>
</html>
```
FILE: styles.css
```css
* { box-sizing: border-box; }
html, body { height: 100%; }
body {
  margin: 0;
  overflow: hidden;
  display: flex;
  flex-direction: column;
  background: #e9e9e9;
  font-family: "Open Sans", "Noto Sans", sans-serif;
  font-size: 8.6px;
  color: #666;
}
.sprite { position: absolute; }
h2, h3 { margin: 0; font-weight: 400; }

/* triangles */
.tri-down, .tri-up, .tri-left, .tri-right { display: block; width: 0; height: 0; flex: none; }
.tri-down { border-left: 4px solid transparent; border-right: 4px solid transparent; border-top: 4px solid var(--tri); }
.tri-up { border-left: 3px solid transparent; border-right: 3px solid transparent; border-bottom: 4px solid var(--tri); }
.tri-left { border-top: 4px solid transparent; border-bottom: 4px solid transparent; border-right: 4px solid var(--tri); }
.tri-right { border-top: 4px solid transparent; border-bottom: 4px solid transparent; border-left: 4px solid #fff; }
.tri-white { --tri: #fff; }
.tri-grey { --tri: #8f8f8f; }
.tri-dark { --tri: #444; }

/* top bar */
.topbar {
  flex: none;
  height: 48px;
  display: flex;
  align-items: flex-start;
  justify-content: space-between;
  background: #96323d;
  border-top: 1px solid #5d5356;
  box-shadow: inset 0 1px 0 #8a3a42;
}
.logo { position: relative; width: 85px; height: 47px; }
.logo-rays { position: absolute; left: 0; top: 3px; width: 80px; height: 30px; }
.logo-name {
  position: absolute; left: 5px; top: 28px;
  font-size: 12px; font-weight: 600; color: #fff; letter-spacing: .3px; line-height: 18px;
}
.account {
  display: flex;
  align-items: center;
  width: 148px;
  height: 28px;
  margin: 11px 6px 0 0;
  background: #a73541;
}
.account-icon { width: 11px; height: 14px; margin-left: 14px; color: #b4b6bc; }
.account-name { margin-left: 4px; width: 90px; font-size: 10.600px; white-space: nowrap; color: #d3aeb3; }
.account-caret { flex: 1; height: 100%; display: flex; align-items: center; justify-content: center; border-left: 1px solid #dcb5ba; }

/* layout */
.layout { flex: 1; min-height: 0; display: flex; }

/* sidebar */
.sidebar { flex: none; width: 167px; background: #94303c; color: #cfa8ae; font-size: 8.900px; }
.group-open { background: #7f2832; box-shadow: 0 1px 0 #74232d; height: 296.300px; }
.nav-item, .nav-sub { position: relative; display: flex; align-items: center; height: 42.330px; white-space: nowrap; }
.nav-item > :first-child { margin-left: 14px; }
.nav-item > span { position: absolute; left: 40px; }
.nav-sub > span { position: absolute; left: 69.500px; }
.nav-sub > :first-child { margin-left: 44px; }
.nav-current { box-shadow: inset 4px 0 0 #b3932f; border-bottom: 1px solid #772530; }
.nav-icon { width: 15px; height: 12px; color: #b9b5b9; }
.nav-sub .nav-icon { width: 13px; height: 11px; }
.nav-euro { width: 13px; text-align: center; font-size: 11px; color: #b9b5b9; }
.nav-arrow { position: absolute; right: 11px; top: 50%; transform: translateY(-50%); }

/* splitters */
.split { flex: none; width: 6px; background: #e9e9e9; position: relative; }
.split-right { width: 7px; }
.split-tab { position: absolute; left: 0; right: 0; top: 278px; height: 18px; background: #dedede; display: flex; align-items: center; justify-content: center; }
.split-tab .tri-left { border-top-width: 3px; border-bottom-width: 3px; border-right-width: 3px; }

/* projects panel */
.projects { flex: none; width: 367px; background: #fff; display: flex; flex-direction: column; }
.projects-head { flex: none; height: 46px; display: flex; align-items: center; background: #a73541; color: #fff; }
.projects-title { margin-left: 11px; width: 198px; font-size: 10.500px; color: #f3dfe1; }
.clock { width: 16px; height: 16px; color: #fff; }
.select {
  display: flex; align-items: center; justify-content: space-between;
  width: 112px; height: 21px; margin-left: 4px; padding: 0 6px 0 7px;
  background: #fff; color: #777; font-size: 8.300px;
}
.collapse { margin-left: 8px; }
.toolbar { flex: none; height: 31px; display: flex; align-items: center; padding: 0 5px 0 6px; }
.filter-box {
  display: flex; align-items: center; justify-content: space-between;
  width: 166px; height: 23px; padding: 0 5px 0 6px;
  border: 1px solid #e4e4e4; border-radius: 2px; color: #999; font-size: 8.400px;
}
.ico-11 { width: 11px; height: 11px; color: #a9a9a9; flex: none; }
.ico-12 { width: 12px; height: 12px; color: #a9a9a9; flex: none; }
.ico-10 { width: 10px; height: 10px; flex: none; }
.filter-by { display: flex; width: 84px; height: 22px; margin-left: 5px; background: #f1f1f1; border: 1px solid #e8e8e8; border-radius: 2px; font-size: 8.200px; color: #777; }
.filter-main { flex: 1; display: flex; align-items: center; gap: 4px; padding-left: 5px; border-right: 1px solid #dfdfdf; }
.filter-caret { width: 18px; display: flex; align-items: center; justify-content: center; }
.tool-btn { width: 21px; height: 22px; display: flex; align-items: center; justify-content: center; background: #f4f4f4; border: 1px solid #e9e9e9; border-radius: 2px; }
.tool-first { margin-left: 14px; }
.tool-sep { width: 1px; height: 9px; margin: 0 5.500px; background: #d5d5d5; }
.grid-head { flex: none; display: grid; align-items: center; background: #fff; border-bottom: 2px solid #e5e5e5; color: #777; font-size: 8.500px; }
.grid-head > span { height: 100%; display: flex; align-items: center; border-left: 1px solid #e5e5e5; padding-left: 6px; }
.grid-head > span:first-child { border-left: 0; padding-left: 7px; }
.list-cols { grid-template-columns: 122px 122px 1fr; }
.projects .grid-head { height: 22px; }
.list-row { flex: none; display: grid; align-items: center; height: 22px; color: #777; font-size: 8.500px; border-bottom: 1px solid #ececec; }
.list-row > span { padding-left: 7px; }
.row-selected { background: #fdeeb7; height: 23px; }
.row-alt { background: #f5f5f5; }
.pager { margin-top: auto; flex: none; height: 30px; display: flex; align-items: center; color: #888; font-size: 8.100px; }
.pg-ico { width: 10px; height: 10px; color: #bdbdbd; flex: none; }
.pg-a { margin-left: 11px; }
.pg-b { margin-left: 17px; }
.pg-sep { width: 1px; height: 9px; margin-left: 11px; background: #d8d8d8; flex: none; }
.pg-page { margin-left: 9px; }
.pg-input { width: 34px; height: 21px; margin-left: 10px; padding-left: 8px; line-height: 19px; border: 1px solid #ddd; flex: none; }
.pg-of { margin-left: 4px; }
.pg-sep2 { margin-left: 9px; }
.pg-c { margin-left: 10px; }
.pg-d { margin-left: 16px; }
.pg-sep3 { margin-left: 10px; }
.pg-refresh { width: 10px; height: 10px; margin-left: 11px; color: #666; flex: none; }

/* right side */
.detail { flex: 1; min-width: 0; display: flex; flex-direction: column; }
.tabs { flex: none; height: 29px; display: flex; align-items: flex-end; background: #a73541; padding-left: 11px; border-top: 1px solid #93303b; color: #f0dadc; font-size: 8.700px; margin-bottom: 6px; }
.tab { display: flex; align-items: center; height: 24px; margin-right: 16px; white-space: nowrap; gap: 4px; }
.tight { margin-left: -2px; }
.tab-ico { color: #fff; height: 12px; flex: none; }
.w13 { width: 13px; } .w14 { width: 14px; } .w16 { width: 16px; } .w17 { width: 17px; height: 14px; }
.tab-active { margin-left: -7px; margin-right: 0; padding: 0 5px 0 4px; background: #fff; border: 2px solid #fff; outline: 1px solid #d9a6ab; outline-offset: -1px; color: #94303c; }
.tab-active .tab-ico { color: #8c2b36; height: 14px; }
.panel-head { flex: none; display: flex; align-items: center; background: #a73541; color: #f3dfe1; }
.panel-head h3 { font-size: 10.600px; margin-left: 10px; }
.tw-head { height: 30px; justify-content: space-between; padding-right: 13px; }
.tw { flex: none; height: 170px; background: #fff; display: flex; flex-direction: column; overflow: hidden; }
.tw-cols { grid-template-columns: 143px 145px 144px 144px 1fr; }
.tw-head-row { height: 23px; }
.tw-body { flex: 1; min-height: 0; display: flex; position: relative; }
.tw-rows { flex: 1; min-width: 0; }
.tw-row { display: grid; align-items: center; height: 22px; color: #777; font-size: 8.500px; border-bottom: 1px solid #efefef; }
.tw-row > span { padding-left: 7px; }
.tw-row > span.time-blue { color: #3f7a96; }
.scrollbar { flex: none; width: 10px; background: #f4f4f4; display: flex; flex-direction: column; align-items: center; }
.sb-up { width: 0; height: 0; margin-top: 4px; border-left: 3px solid transparent; border-right: 3px solid transparent; border-bottom: 4px solid #888; }
.sb-thumb { width: 9px; height: 83px; margin-top: 4px; background: #c1c1c1; }
.sb-down { width: 0; height: 0; margin-top: auto; margin-bottom: 5px; border-left: 3px solid transparent; border-right: 3px solid transparent; border-top: 4px solid #333; }
.hsplit { flex: none; height: 6px; background: #e9e9e9; display: flex; justify-content: center; margin-left: -1px; }
.hsplit-tab { width: 32px; height: 6px; background: #dcdcdc; display: flex; align-items: center; justify-content: center; }
.map-head { height: 37px; font-size: 8px; }
.map-head h3 { margin-right: auto; }
.map-btn { display: flex; align-items: center; gap: 5px; height: 23px; padding: 0 6px; margin-right: 2px; border: 1px solid #9c3440; color: #f0dadc; white-space: nowrap; }
.map-btn:last-child { margin-right: 13px; }
.map { flex: 1; min-height: 0; position: relative; overflow: hidden; background: #e2dfdc; }
.map-svg { display: block; width: 100%; height: 100%; font-family: "Open Sans", "Noto Sans", sans-serif; }
.zoom-ctl { position: absolute; left: 6px; top: 7px; display: flex; flex-direction: column; gap: 1px; }
.zoom-btn { width: 14px; height: 13px; background: #5b88a9; color: #fff; font-size: 11px; font-weight: 700; line-height: 12px; text-align: center; }
.scale-bar { position: absolute; left: 6px; bottom: 6px; width: 47px; height: 13px; background: rgba(100,140,190,.45); border: 1px solid #a8bcd4; color: #667; font-size: 7px; line-height: 11px; text-align: center; }
.attribution { position: absolute; right: 0; bottom: 0; height: 7px; width: 122px; padding-left: 3px; background: rgba(255,255,255,.85); font-size: 7.200px; line-height: 8px; color: #555; white-space: nowrap; }
.osm-link { color: #2a7fc0; }
.osm-dot { display: inline-block; width: 8px; height: 7px; margin-right: 3px; background: #3fb0c0; border-radius: 50%; }

/* map labels */
.t-num text { font-size: 21px; fill: #938b83; }
.t-name, .t-name text { font-size: 22.500px; fill: #5a5550; }
.t-road text { font-size: 21.500px; fill: #222; stroke: #fff; stroke-opacity: .7; stroke-width: 3px; paint-order: stroke; }
.t-road-s text { font-size: 7.300px; fill: #222; stroke: #fff; stroke-opacity: .5; stroke-width: 1px; paint-order: stroke; }
.t-ing { font-size: 20px; fill: #734a08; }
.t-big { font-size: 54px; font-weight: 700; fill: #b79ad0; }
.t-p text, text.t-p { font-size: 34px; font-weight: 700; fill: #0092da; }
.t-poi text { font-size: 20px; fill: #734a08; }
.t-shield { font-size: 7.500px; fill: #66303a; text-anchor: middle; }
.t-texaco3 { font-size: 20px; fill: #1a78c8; text-anchor: middle; }
.t-kinder3 { font-size: 19px; font-style: italic; fill: #5e6a30; }
.t-tree text { font-size: 22px; fill: #8aa878; }
.t-station { font-size: 8.300px; fill: #3434c0; text-anchor: middle; }
.t-num-s { font-size: 7px; fill: #8c8279; }
```
